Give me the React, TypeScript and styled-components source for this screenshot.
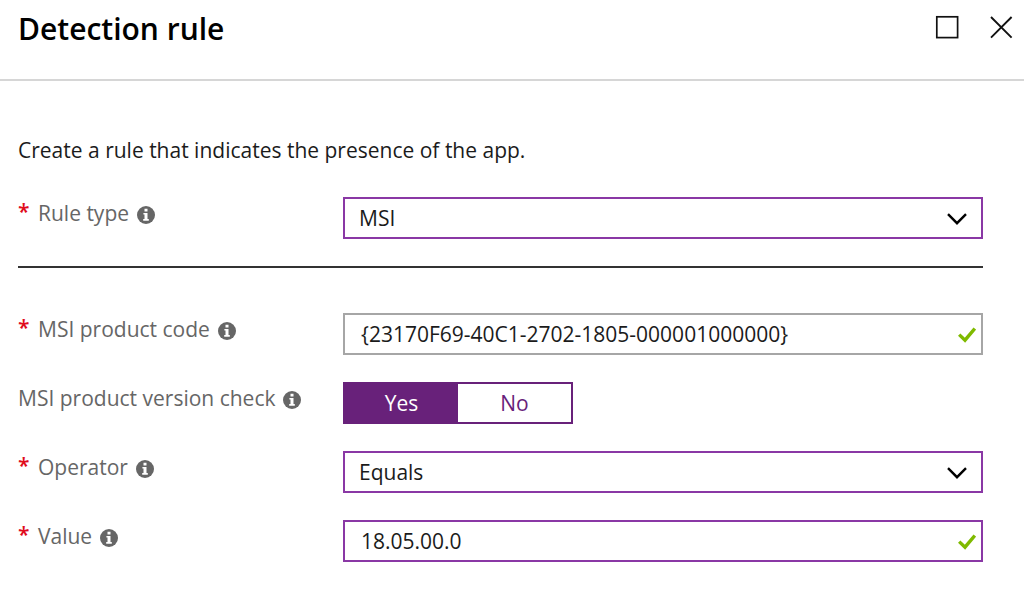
import React, { useState } from "react";
import styled, { createGlobalStyle, css } from "styled-components";

const color = {
  text: "#1b1b1b",
  label: "#666666",
  purple: "#8a38a5",
  purpleFill: "#68217a",
  grey: "#a6a6a6",
  required: "#e00b1c",
  valid: "#7fba00",
};

const GlobalStyle = createGlobalStyle`
  *, *::before, *::after { box-sizing: border-box; }
  body {
    margin: 0;
    background: #fff;
    color: ${color.text};
    font-family: "Segoe UI", "Open Sans", "Noto Sans", sans-serif;
    font-size: 21px;
    line-height: 28px;
  }
`;

const Header = styled.header`
  display: flex;
  justify-content: space-between;
  align-items: flex-start;
  padding: 7px 10px 28px 18px;
  border-bottom: 2px solid #d6d6d6;
`;

const Title = styled.h1`
  margin: 0;
  font-size: 30px;
  line-height: 44px;
  font-weight: 600;
  color: #000;
`;

const WindowButtons = styled.div`
  display: flex;
  gap: 28px;
  padding-top: 7px;
`;

const IconButton = styled.button`
  display: flex;
  padding: 0;
  border: 0;
  background: none;
  color: #111;
  cursor: pointer;
`;

const Form = styled.form`
  padding: 55px 41px 40px 18px;
`;

const Intro = styled.p`
  margin: 0 0 33px;
`;

const Divider = styled.hr`
  margin: 27px 0 45px;
  border: 0;
  border-top: 2px solid #333;
`;

const Rows = styled.div`
  display: grid;
  gap: 27px;
`;

const Row = styled.div`
  display: grid;
  grid-template-columns: 325px minmax(0, 1fr);
  align-items: start;
`;

const LabelCell = styled.div`
  display: flex;
  align-items: center;
  gap: 8px;
  line-height: 32px;
  color: ${color.label};
`;

const Caption = styled.label`
  display: flex;
`;

const Required = styled.span`
  width: 20px;
  color: ${color.required};
  font-weight: 600;
  line-height: 28px;
`;

const InfoMark = styled.svg`
  flex: none;
  margin-top: 3px;
`;

const Field = styled.div`
  position: relative;
`;

const control = css<{ $accent?: boolean }>`
  display: block;
  width: 100%;
  height: 42px;
  border: 2px solid ${(p) => (p.$accent ? color.purple : color.grey)};
  border-radius: 0;
  background: #fff;
  color: ${color.text};
  font: inherit;
`;

const Select = styled.select<{ $accent?: boolean }>`
  ${control}
  appearance: none;
  padding: 0 48px 0 14px;
`;

const Input = styled.input<{ $accent?: boolean }>`
  ${control}
  padding: 0 48px 0 16px;
`;

const FieldIcon = styled.span<{ $right: number }>`
  position: absolute;
  top: 2px;
  bottom: 0;
  right: ${(p) => p.$right}px;
  display: flex;
  align-items: center;
  pointer-events: none;
`;

const Toggle = styled.div`
  display: grid;
  grid-template-columns: 1fr 1fr;
  width: 230px;
  height: 42px;
  border: 2px solid ${color.purpleFill};
`;

const Option = styled.label<{ $on: boolean }>`
  position: relative;
  display: flex;
  align-items: center;
  justify-content: center;
  background: ${(p) => (p.$on ? color.purpleFill : "#fff")};
  color: ${(p) => (p.$on ? "#fff" : color.purpleFill)};
  cursor: pointer;
`;

const Radio = styled.input`
  position: absolute;
  inset: 0;
  margin: 0;
  opacity: 0;
  cursor: pointer;
`;

const InfoIcon = () => (
  <InfoMark width="18" height="18" viewBox="0 0 18 18" aria-hidden="true">
    <circle cx="9" cy="9" r="9" fill="#666" />
    <path d="M7.5 2.8h3v2.7h-3zM6.4 7h4.1v6h1.3v1.7H6.2V13h1.3V8.6H6.4z" fill="#fff" />
  </InfoMark>
);

const Chevron = () => (
  <svg width="20" height="12" viewBox="0 0 20 12" fill="none" aria-hidden="true">
    <path d="M1 1.2 10 10.2 19 1.2" stroke="#000" strokeWidth="2.4" />
  </svg>
);

const Check = () => (
  <svg width="18" height="16" viewBox="0 0 18 16" fill="none" aria-hidden="true">
    <path d="M1.2 7.6 7 13.2 16.8 1.6" stroke={color.valid} strokeWidth="3.4" />
  </svg>
);

type FormRowProps = {
  label: string;
  id: string;
  required?: boolean;
  group?: boolean;
  children: React.ReactNode;
};

function FormRow({ label, id, required, group, children }: FormRowProps) {
  return (
    <Row>
      <LabelCell>
        <Caption as={group ? "span" : "label"} {...(group ? { id } : { htmlFor: id })}>
          {required && <Required>*</Required>}
          {label}
        </Caption>
        <InfoIcon />
      </LabelCell>
      {children}
    </Row>
  );
}

export default function App() {
  const [check, setCheck] = useState("Yes");

  return (
    <>
      <GlobalStyle />
      <Header>
        <Title>Detection rule</Title>
        <WindowButtons>
          <IconButton type="button" aria-label="Maximize">
            <svg width="26" height="26" viewBox="0 0 26 26" fill="none">
              <rect x="2.8" y="2.8" width="20.8" height="20.8" stroke="currentColor" strokeWidth="1.7" />
            </svg>
          </IconButton>
          <IconButton type="button" aria-label="Close">
            <svg width="26" height="26" viewBox="0 0 26 26" fill="none">
              <path d="M3 3 23.6 23.6M23.6 3 3 23.6" stroke="currentColor" strokeWidth="1.9" />
            </svg>
          </IconButton>
        </WindowButtons>
      </Header>
      <Form onSubmit={(e) => e.preventDefault()}>
        <Intro>Create a rule that indicates the presence of the app.</Intro>
        <FormRow label="Rule type" id="rule-type" required>
          <Field>
            <Select id="rule-type" $accent defaultValue="MSI">
              <option>MSI</option>
            </Select>
            <FieldIcon $right={16}><Chevron /></FieldIcon>
          </Field>
        </FormRow>
        <Divider />
        <Rows>
          <FormRow label="MSI product code" id="product-code" required>
            <Field>
              <Input id="product-code" defaultValue="{23170F69-40C1-2702-1805-000001000000}" />
              <FieldIcon $right={7}><Check /></FieldIcon>
            </Field>
          </FormRow>
          <FormRow label="MSI product version check" id="version-check" group>
            <Toggle role="radiogroup" aria-labelledby="version-check">
              {["Yes", "No"].map((value) => (
                <Option key={value} $on={check === value}>
                  <Radio
                    type="radio"
                    name="version-check"
                    value={value}
                    checked={check === value}
                    onChange={() => setCheck(value)}
                  />
                  {value}
                </Option>
              ))}
            </Toggle>
          </FormRow>
          <FormRow label="Operator" id="operator" required>
            <Field>
              <Select id="operator" $accent defaultValue="Equals">
                <option>Equals</option>
              </Select>
              <FieldIcon $right={16}><Chevron /></FieldIcon>
            </Field>
          </FormRow>
          <FormRow label="Value" id="value" required>
            <Field>
              <Input id="value" $accent defaultValue="18.05.00.0" />
              <FieldIcon $right={7}><Check /></FieldIcon>
            </Field>
          </FormRow>
        </Rows>
      </Form>
    </>
  );
}
